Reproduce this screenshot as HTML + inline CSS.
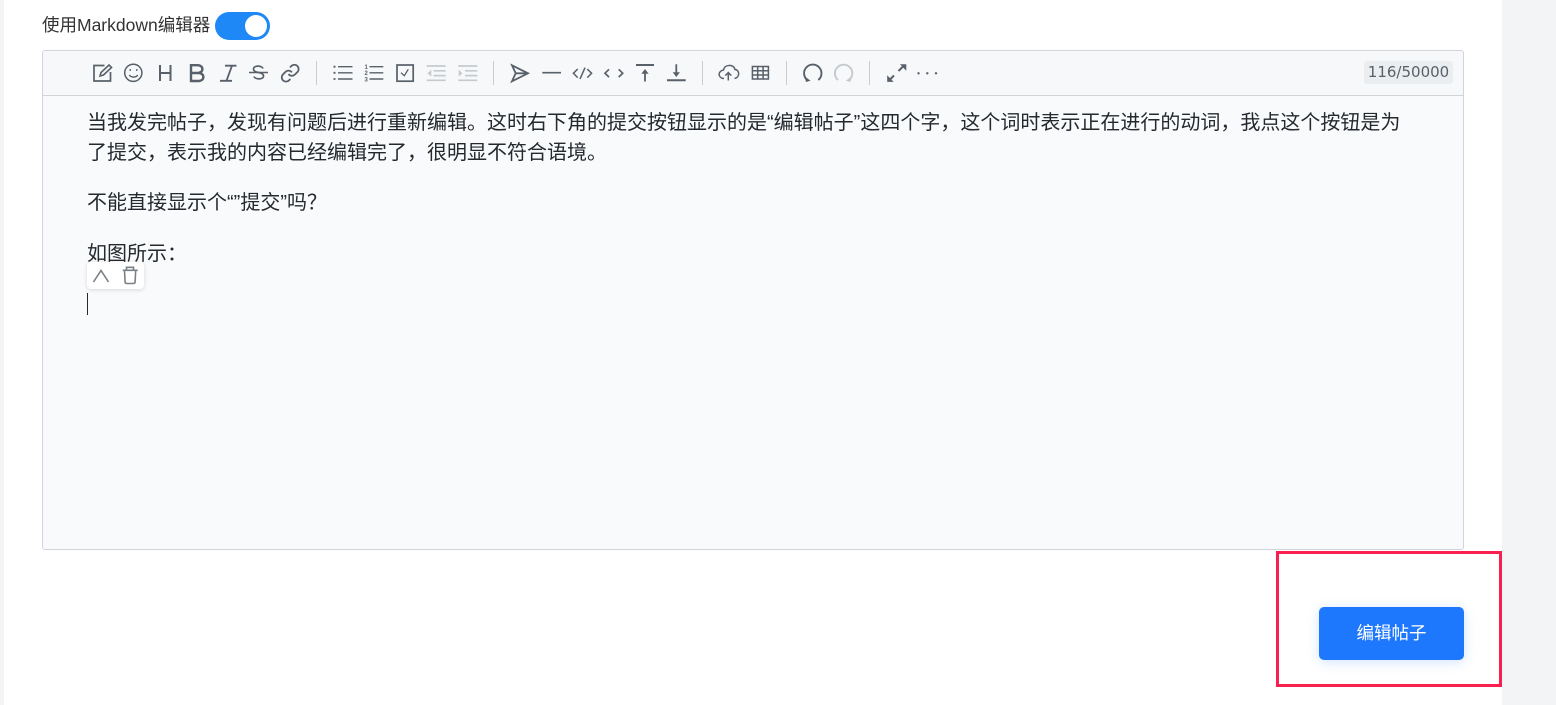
<!DOCTYPE html>
<html><head><meta charset="utf-8"><style>
*{box-sizing:border-box}
html,body{margin:0;padding:0;width:1556px;height:705px;overflow:hidden;background:#f3f4f6;font-family:"Liberation Sans","Noto Sans CJK SC",sans-serif}
.abs{position:absolute}
#card{left:4px;top:0;width:1498px;height:705px;background:#fff}
#label{left:42px;top:14px;font-size:17.5px;line-height:22px;color:#333;white-space:nowrap}
#sw{left:215px;top:12px;width:55px;height:28px;border-radius:14px;background:#1e88f7}
#sw i{position:absolute;left:30px;top:3px;width:22px;height:22px;border-radius:50%;background:#fff}
#ed{left:42px;top:50px;width:1422px;height:500px;border:1px solid #d1d5db;border-radius:3px;background:#f9fafc}
#tb{left:43px;top:51px;width:1420px;height:45px;background:#f6f8fa;border-bottom:1px solid #d1d5da;border-radius:3px 3px 0 0}
#cnt{left:1364px;top:61px;width:89px;height:23px;background:#ebeef0;border-radius:3px;font:15px/23px "DejaVu Sans",sans-serif;color:#586069;text-align:center;white-space:nowrap}
.t{left:87px;font-size:20px;line-height:30px;color:#24292e;white-space:nowrap}
#pop{left:87px;top:262px;width:57px;height:27px;background:#fff;border-radius:4px;box-shadow:0 1px 4px rgba(0,0,0,.14)}
#caret{left:87px;top:293px;width:1px;height:22px;background:#24292e}
#box{left:1276px;top:551px;width:225.5px;height:135.5px;border:3px solid #f9204f}
#btn{left:1319px;top:607px;width:145px;height:53px;border-radius:5px;background:#1e78fd;color:#fff;font-size:17.5px;line-height:53px;text-align:center;box-shadow:0 2px 12px rgba(30,120,253,.2)}
svg{position:absolute;left:0;top:0}
</style></head><body>
<div class="abs" id="card"></div>
<div class="abs" id="label">使用Markdown编辑器</div>
<div class="abs" id="sw"><i></i></div>
<div class="abs" id="ed"></div>
<div class="abs" id="tb"></div>
<svg width="1556" height="705" fill="none" stroke="#586069" stroke-width="1.7">
<g stroke="#c9cdd2" stroke-width="1"><path d="M316.500 61v24M493.500 61v24M702.500 61v24M786.500 61v24M869.500 61v24"/></g>
<!-- edit -->
<path d="M104.500 65.500h-10.500v15.500h16.500v-9"/><path d="M100 76l1-3.500 8-7.500 2.500 2.500-8 7.500z" stroke-width="1.600"/>
<!-- emoji -->
<circle cx="133.300" cy="72.800" r="8.600" stroke-width="1.500"/><path d="M129.300 75c2 2.800 6.500 2.800 8.400 0" stroke-width="1.500"/><path d="M129.500 70h1.500M136 70h1.500" stroke-width="1.700"/>
<!-- H B I S -->
<path d="M160 65v16M170.500 65v16M160 73h10.500" stroke-width="2"/>
<path d="M191 65.200h6.500c6.500 0 6.500 7.800 0 7.800h-6.500zM191 73h7.500c6.500 0 6.500 8 0 8h-7.500z" stroke-width="2.400"/>
<path d="M225 65.700h11.500M220 80.800h12M232 65.700l-5.500 15" stroke-width="1.800"/>
<path d="M249 72.500h19" stroke-width="1.500"/><path d="M263 68.500c-1-3-9.500-3.500-9.500 .5 0 2 2 3 5 3.500 3 .5 5 1.500 5 3.500 0 4-8.500 3.500-9.500 .5" stroke-width="1.700"/>
<!-- link -->
<g transform="translate(280 63) scale(.85)" stroke-width="2.100"><path d="M10 13a5 5 0 0 0 7.540.54l3-3a5 5 0 0 0-7.070-7.070l-1.720 1.710"/><path d="M14 11a5 5 0 0 0-7.540-.54l-3 3a5 5 0 0 0 7.070 7.070l1.710-1.710"/></g>
<!-- lists -->
<path d="M338 66.700h14.500M338 72.800h14.500M338 79h14.500" stroke-width="1.400"/><path d="M333.500 66.700h2M333.500 72.800h2M333.500 79h2" stroke-width="1.800"/>
<path d="M369.500 66.700h13.800M369.500 72.800h13.800M369.500 79h13.800" stroke-width="1.400"/>
<g fill="#586069" stroke="none" font-family="Liberation Sans" font-size="6" font-weight="700"><text x="364.500" y="69">1</text><text x="364.500" y="75.200">2</text><text x="364.500" y="81.300">3</text></g>
<rect x="397" y="65" width="16.200" height="16.200"/><path d="M401 72.700l3.300 3 4-6.400" stroke-width="1.300"/>
<g stroke="#c6cacf" stroke-width="1.700"><path d="M426.700 66h19M433.500 70.800h12.200M433.500 75.600h12.200M426.700 80.300h19"/><path d="M431 70.500v5.500l-3-2.700z" fill="#c6cacf" stroke-width=".6"/></g>
<g stroke="#c6cacf" stroke-width="1.700"><path d="M458.300 66h19M465 70.800h12.300M465 75.600h12.300M458.300 80.300h19"/><path d="M459 70.500v5.500l3-2.700z" fill="#c6cacf" stroke-width=".6"/></g>
<!-- quote/send -->
<path d="M512 65.300l16 8-16 8 3.700-8zM515.700 73.300h12" stroke-width="1.800"/>
<path d="M542.300 72.700h18.700" stroke-width="1.600"/>
<path d="M577.700 69l-4.300 4.300 4.300 4.300M587.300 69l4.300 4.300-4.300 4.300M585 67.700l-5 11.300" stroke-width="1.500"/>
<path d="M609 69.300l-4 3.900 4 3.900M618.700 69.300l4 3.900-4 3.900" stroke-width="1.700"/>
<!-- top bottom -->
<path d="M636 65h18" stroke-width="2"/><path d="M645 81.500v-9" stroke-width="1.800"/><path d="M645 69l-3.600 4.800h7.200z" fill="#586069" stroke="none"/>
<path d="M667 80.300h18.700" stroke-width="2"/><path d="M676.300 64.300v8.500" stroke-width="1.800"/><path d="M676.300 77l-3.600-4.800h7.200z" fill="#586069" stroke="none"/>
<!-- upload -->
<path d="M724 78.500c-6.300-.3-6.500-7.500-.5-8.500 1.200-6 10.300-6 11.500-.5 4.900 .3 5 8.200-.5 9" stroke-width="1.500"/><path d="M728.300 80.500v-7.500M725.300 75.600l3-3 3 3" stroke-width="1.500"/>
<!-- table -->
<path d="M752.400 66.500h16v12.500h-16zM752.400 70.800h16M752.400 75h16M757.700 66.500v12.500M763.100 66.500v12.500" stroke-width="1.500"/>
<!-- undo redo -->
<path d="M807.500 80.200A8.700 8.700 0 1 1 818.300 80" stroke-width="1.900"/><path d="M804.600 76.200l1.400 5.800 4.500-1.300z" fill="#586069" stroke="none"/>
<path d="M838 80A8.700 8.700 0 1 1 849 80.200" stroke="#c6cacf" stroke-width="1.900"/><path d="M851.700 76.200l-1.400 5.800-4.500-1.300z" fill="#c6cacf" stroke="none"/>
<!-- fullscreen -->
<path d="M898.500 71l5.500-5.500M889.500 80l4.500-4.500" stroke-width="2"/><path d="M900 64.300h6.300v6.500zM887.200 75.300v6.600h6.500z" fill="#586069" stroke="none"/>
<!-- more -->
<g fill="#586069" stroke="none"><circle cx="918.500" cy="73.300" r="1.200"/><circle cx="927.300" cy="73.300" r="1.200"/><circle cx="936" cy="73.300" r="1.200"/></g>
</svg>
<div class="abs" id="cnt">116/50000</div>
<div class="abs t" style="top:108px">当我发完帖子，发现有问题后进行重新编辑。这时右下角的提交按钮显示的是“编辑帖子”这四个字，这个词时表示正在进行的动词，我点这个按钮是为</div>
<div class="abs t" style="top:138px">了提交，表示我的内容已经编辑完了，很明显不符合语境。</div>
<div class="abs t" style="top:188px">不能直接显示个“”提交”吗？</div>
<div class="abs t" style="top:239px">如图所示：</div>
<div class="abs" id="pop"></div>
<svg width="1556" height="705" fill="none" stroke="#7a8087" stroke-width="1.600">
<path d="M93.500 282l7.500-11.500 7.500 11.500"/>
<path d="M122.700 270.300h15M126.500 270v-2.700h7v2.700"/><path d="M124.500 270.500l.6 11.500q.1 1.500 1.500 1.500h7q1.400 0 1.500-1.500l.6-11.500"/>
</svg>
<div class="abs" id="caret"></div>
<div class="abs" id="box"></div>
<div class="abs" id="btn">编辑帖子</div>
</body></html>
